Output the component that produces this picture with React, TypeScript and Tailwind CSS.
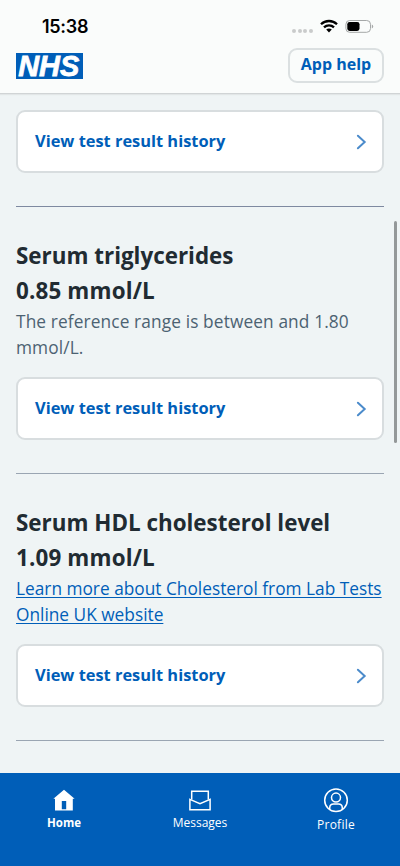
type Result = {
  name: string;
  value: string;
  note?: string;
  link?: string;
};

const results: Result[] = [
  {
    name: "Serum triglycerides",
    value: "0.85 mmol/L",
    note: "The reference range is between and 1.80 mmol/L.",
  },
  {
    name: "Serum HDL cholesterol level",
    value: "1.09 mmol/L",
    link: "Learn more about Cholesterol from Lab Tests Online UK website",
  },
];

const App: React.FC = () => {
  return (
    <div className="w-[400px] h-[866px] flex flex-col overflow-hidden bg-[#eff4f5] font-['Open_Sans',sans-serif]">
      <Header />
      <main className="relative flex-1 min-h-0 overflow-hidden px-4 pt-4">
        <HistoryCard />
        <hr className="mt-[33px] border-t border-[#7e89a0]" />
        {results.map((r) => (
          <ResultSection key={r.name} result={r} />
        ))}
        <div className="absolute right-[3px] top-[127px] w-[3px] h-[222px] rounded-full bg-[#949899]" />
      </main>
      <TabBar />
    </div>
  );
};

const Header: React.FC = () => {
  return (
    <header className="h-[94px] shrink-0 bg-[#fafcfb] border-b border-[#d0d4d5] shadow-[0_1px_1px_#e2e6e7]">
      <div className="flex h-12 items-start justify-between pl-[42px] pr-[26px]">
        <span className="mt-[15px] font-['Inter',sans-serif] text-[18px] leading-6 font-semibold text-black tracking-[-0.3px]">
          15:38
        </span>
        <div className="flex mt-[19px] items-start">
          <div className="flex gap-[1.7px] mt-[10.2px] mr-[7px]">
            <i className="size-[4px] rounded-full bg-[#c9cbcb]" />
            <i className="size-[4px] rounded-full bg-[#c9cbcb]" />
            <i className="size-[4px] rounded-full bg-[#c9cbcb]" />
            <i className="size-[4px] rounded-full bg-[#c9cbcb]" />
          </div>
          <WifiIcon />
          <BatteryIcon />
        </div>
      </div>
      <div className="flex items-start justify-between px-4">
        <NhsLogo />
        <button className="h-[35px] w-[96px] rounded-[9px] border-2 border-[#dbe0e1] pb-[3px] text-[16px] leading-5 font-bold text-[#005eb8]">
          App help
        </button>
      </div>
    </header>
  );
};

const NhsLogo: React.FC = () => {
  return (
    <svg width="67" height="26" viewBox="0 0 67 26" className="mt-[5px] overflow-visible">
      <rect width="67" height="26" fill="#005eb8" />
      <text
        x="2.2"
        y="23"
        fontFamily="Liberation Sans, sans-serif"
        fontSize="29"
        fontWeight="700"
        fontStyle="italic"
        fill="#fff"
        stroke="#fff"
        strokeWidth="0.8"
        textLength="61"
        lengthAdjust="spacingAndGlyphs"
      >
        NHS
      </text>
    </svg>
  );
};

const WifiIcon: React.FC = () => {
  return (
    <svg width="18" height="14" viewBox="0 0 18 14" fill="none" stroke="#000" strokeWidth="2.3">
      <path d="M1 5.2C5.4 0.9 12.6 0.9 17 5.2" />
      <path d="M4 8.4C6.8 5.7 11.2 5.7 14 8.4" />
      <path d="M6.2 10.6C7.8 9.1 10.2 9.1 11.8 10.6L9 13.4Z" fill="#000" stroke="none" />
    </svg>
  );
};

const BatteryIcon: React.FC = () => {
  return (
    <svg width="29" height="14" viewBox="0 0 29 14" className="ml-[7px]">
      <rect x="0.9" y="1.5" width="24.6" height="11.8" rx="3.8" fill="none" stroke="#a5a8a8" />
      <rect x="2.3" y="2.9" width="12.2" height="9" rx="2.3" fill="#000" />
      <path d="M26.8 5.4q1.4 0.6 1.4 2t-1.4 2z" fill="#a5a8a8" />
    </svg>
  );
};

const HistoryCard: React.FC = () => {
  return (
    <a className="flex h-[63px] items-center justify-between rounded-[9px] border-2 border-[#d8dddf] bg-white pl-[17px] pr-[15px] text-[16.4px] font-bold text-[#005eb8]">
      <span>View test result history</span>
      <svg width="11" height="16" viewBox="0 0 11 16" fill="none" stroke="#4b8bcb" strokeWidth="2">
        <path d="M1.9 1.7L8.7 8L1.9 14.3" strokeLinecap="round" />
      </svg>
    </a>
  );
};

const ResultSection: React.FC<{ result: Result }> = ({ result }) => {
  return (
    <section className="h-[267px] border-b border-[#9aa5b2] pt-[31px]">
      <h2 className="text-[22.4px] leading-[35px] font-bold text-[#212b32]">
        {result.name}
        <br />
        <span className="tracking-[0.15px]">{result.value}</span>
      </h2>
      <div className="mt-px mb-4 text-[17.3px] leading-[26px] text-[#4c6272]">
        {result.note && <p className="tracking-[0.12px]">{result.note}</p>}
        {result.link && (
          <a className="text-[#005eb8] underline underline-offset-2 decoration-1">
            {result.link}
          </a>
        )}
      </div>
      <HistoryCard />
    </section>
  );
};

const TabBar: React.FC = () => {
  return (
    <nav className="flex h-[93px] shrink-0 bg-[#005eb8] text-[12px] leading-4 text-white">
      <a className="flex w-32 flex-col items-center gap-1 pt-4 text-[11.5px] font-bold">
        <svg width="22" height="22" viewBox="0 0 22 22" fill="#fff">
          <path
            fillRule="evenodd"
            d="M11 0.8L21.6 9.8H19.8V21.5H2V9.8H0.4ZM8.8 12V20.3H13.2V12Z"
          />
        </svg>
        <span>Home</span>
      </a>
      <a className="flex flex-1 flex-col items-center gap-1 pt-4">
        <svg width="22" height="22" viewBox="0 0 22 22" fill="none" stroke="#fff" strokeWidth="1.5">
          <path d="M2.7 10.5V2.3H19.3V10.5" />
          <path d="M0.9 10.4L11 14.6L21.1 10.4V20.8H0.9Z" />
        </svg>
        <span>Messages</span>
      </a>
      <a className="flex w-32 flex-col items-center gap-1 pt-[14px] tracking-[0.25px]">
        <svg width="26" height="26" viewBox="0 0 26 26" fill="none" stroke="#fff" strokeWidth="1.5">
          <circle cx="13" cy="13.3" r="11.3" />
          <circle cx="13" cy="10.6" r="4.5" />
          <path d="M6.7 22.4V21C6.7 18.6 8.2 17.1 10.6 17.1H15.4C17.8 17.1 19.3 18.6 19.3 21V22.4" />
        </svg>
        <span>Profile</span>
      </a>
    </nav>
  );
};

export default App;
